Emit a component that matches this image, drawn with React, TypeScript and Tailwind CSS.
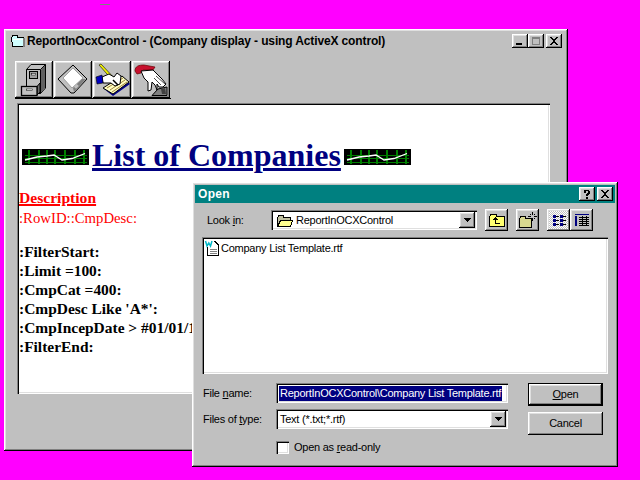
import type React from "react"

const raised = "bg-[#c0c0c0] shadow-[inset_-1px_-1px_0_#000,inset_1px_1px_0_#fff,inset_-2px_-2px_0_#808080,inset_2px_2px_0_#dfdfdf]"
const sunken = "shadow-[inset_1px_1px_0_#808080,inset_2px_2px_0_#000,inset_-1px_-1px_0_#fff,inset_-2px_-2px_0_#dfdfdf]"

function CaptionButton({ children, className = "" }: { children: React.ReactNode; className?: string }) {
  return (
    <div className={`flex h-[14px] w-[16px] items-center justify-center ${raised} ${className}`}>
      <svg width="12" height="10" viewBox="0 0 12 10" shapeRendering="crispEdges">
        {children}
      </svg>
    </div>
  )
}

const closeGlyph = <path d="M2 1h2v1h1v1h2V2h1V1h2v1H9v1H8v1H7v2h1v1h1v1h1v1H8V8H7V7H5v1H4v1H2V8h1V7h1V6h1V4H4V3H3V2H2z" fill="#000" />

function Equalizer() {
  const bars = [6, 16, 24, 32, 42, 52, 61]
  return (
    <svg width="67" height="16" viewBox="0 0 67 16" className="shrink-0" shapeRendering="crispEdges">
      <rect width="67" height="16" fill="#000" />
      {bars.map((x) => (
        <rect key={x} x={x} y="1" width="2" height="14" fill="#008000" />
      ))}
      <rect x="3" y="6" width="62" height="1" fill="#008000" />
      <rect x="3" y="9" width="62" height="1" fill="#008000" />
      <rect x="3" y="13" width="62" height="1" fill="#008000" />
      <path d="M3 11 L15 8 L25 7 L32 6 L40 11 L50 9.500 L63 4.500" fill="none" stroke="#fff" strokeWidth="1.300" shapeRendering="auto" />
    </svg>
  )
}

function Cabinet() {
  return (
    <svg width="38" height="37" viewBox="0 0 38 37">
      <path d="M11.500 8.500 L16 3.500 H30.500 V27 L25.500 32.500 H11.500z" fill="#c0c0c0" stroke="#000" />
      <path d="M11.500 8.500 H25.500 L30.500 3.500 M25.500 8.500 V32.500" fill="none" stroke="#000" />
      <path d="M26 8.500 L30 4.500 V27 L26 31.500z" fill="#606060" />
      <rect x="14.500" y="10.500" width="8" height="7" fill="#a0a0a0" stroke="#000" />
      <rect x="16.500" y="12.500" width="4" height="1.500" fill="#fff" stroke="#000" strokeWidth=".5" />
      <path d="M22 25.500 L25 22 V31 L22 34z" fill="#707070" stroke="#000" />
      <rect x="6.500" y="25.500" width="15.500" height="9" fill="#c0c0c0" stroke="#000" strokeWidth="1.300" />
      <rect x="11.500" y="28" width="6" height="1.500" fill="#fff" stroke="#000" strokeWidth=".5" />
    </svg>
  )
}

function Floppy() {
  return (
    <svg width="38" height="37" viewBox="0 0 38 37">
      <path d="M19 4 L33 18 L20 32 H17 L4 18z" fill="#c0c0c0" stroke="#000" />
      <path d="M19 7 L29 17 L18 27 L9 17z" fill="#fff" stroke="#a0a0a0" />
      <path d="M19 27 L28 18 L32 18 L20 31z" fill="#808080" />
      <rect x="21" y="23" width="3" height="4" fill="#c0c0c0" transform="rotate(45 22 25)" />
    </svg>
  )
}

function Notepad() {
  return (
    <svg width="38" height="37" viewBox="0 0 38 37">
      <path d="M11 28 L30 16 L37 23 L20 35z" fill="#00008b" />
      <path d="M10 27 L29 15 L36 21 L20 33z" fill="#ffffc0" stroke="#000" />
      <path d="M14 27 L30 17 M17 29 L32 19 M19 31 L34 21" stroke="#a08040" fill="none" />
      <path d="M6 4 L8 3 L24 20 L22 22z" fill="#f0f000" stroke="#000" strokeWidth=".6" />
      <path d="M9 16 L16 13 L21 16 L24 12 L28 15 L27 23 L22 25 L18 22 L10 22z" fill="#fff" stroke="#000" />
      <path d="M3 16 L9 14 L10 22 L4 23z" fill="#0000c0" stroke="#000" strokeWidth=".6" />
      <path d="M20 19 L25 24" stroke="#000" strokeWidth="1.500" />
    </svg>
  )
}

function PointingHand() {
  return (
    <svg width="38" height="37" viewBox="0 0 38 37">
      <path d="M3 10 C3 5 7 4 12 4 L23 6 L21 9 L11 9 L9 12 L5 13z" fill="#c8102e" stroke="#600" strokeWidth=".7" />
      <path d="M9 10 L21 9 L30 18 L34 23 L31 26 L27 26 L25 23 L25 29 L23 24 L20 21 L19 29 L16 30 L16 21 L12 17z" fill="#fff" stroke="#000" />
      <path d="M24 15 L33 23 M22 17 L29 24" stroke="#000" strokeWidth=".7" />
      <path d="M20 34.500 L26 28 L35 26 V34.500z" fill="#808080" stroke="#000" />
      <path d="M29 28 L33 27 L34 33 L30 33z" fill="#404040" />
    </svg>
  )
}

function ToolButton({ children }: { children: React.ReactNode }) {
  return <div className={`h-[37px] w-[38px] ${raised}`}>{children}</div>
}

function FolderIcon({ className = "" }: { className?: string }) {
  return (
    <svg width="16" height="13" viewBox="0 0 16 13" className={className} shapeRendering="crispEdges">
      <path d="M0.500 3.500 L2 1.500 H6 L7 3.500 H13.500 V12.500 H0.500z" fill="#c0c0a0" stroke="#000" />
      <path d="M3.500 6.500 H15.500 L13.500 12.500 H0.500z" fill="#ffff90" stroke="#000" />
    </svg>
  )
}

function UpFolder() {
  return (
    <svg width="16" height="14" viewBox="0 0 16 14" shapeRendering="crispEdges">
      <path d="M0.500 3.500 L2 1.500 H7 L8 3.500 H15.500 V13.500 H0.500z" fill="#ffff70" stroke="#000" />
      <path d="M4 6h1v-1h1v-1h1v1h1v1h1v1H7v3h4v1H6V7H4z" fill="#000" />
    </svg>
  )
}

function NewFolder() {
  return (
    <svg width="18" height="16" viewBox="0 0 18 16" shapeRendering="crispEdges">
      <path d="M0.500 6.500 L2 4.500 H6 L7 6.500 H12.500 V15.500 H0.500z" fill="#d8d890" stroke="#000" />
      <path d="M13 0h1v3h-1zM13 6h1v3h-1zM9 4h3v1H9zM15 4h3v1h-3zM11 2h1v1h-1zM15 2h1v1h-1zM15 6h1v1h-1z" fill="#000" />
    </svg>
  )
}

function DropArrow() {
  return (
    <svg width="7" height="4" viewBox="0 0 7 4" shapeRendering="crispEdges">
      <path d="M0 0h7v1H6v1H5v1H4v1H3V3H2V2H1V1H0z" fill="#000" />
    </svg>
  )
}

function ComboArrow() {
  return (
    <div className={`flex h-[16px] w-[16px] shrink-0 items-center justify-center ${raised}`}>
      <DropArrow />
    </div>
  )
}

function SmallButton({ children, className = "" }: { children: React.ReactNode; className?: string }) {
  return (
    <div className={`flex h-[22px] w-[23px] items-center justify-center ${raised} ${className}`}>
      {children}
    </div>
  )
}

function DocLine({ children }: { children: React.ReactNode }) {
  return <p className="h-[19px] whitespace-nowrap text-[15.450px] leading-[19px] font-bold text-black">{children}</p>
}

export default function App() {
  return (
    <div className="relative h-[480px] w-[640px] overflow-hidden bg-[#ff00ff] font-['Liberation_Sans',sans-serif] text-[12px] text-black">
      <div className="absolute top-[4px] left-[100px] h-px w-[10px] bg-[#808080]" />

      {/* main window */}
      <div className={`absolute top-[29px] left-[4px] flex h-[422px] w-[564px] flex-col p-[3px] ${raised}`}>
        <div className="flex h-[18px] shrink-0 items-center pr-[3px] pl-[4px]">
          <svg width="14" height="12" viewBox="0 0 14 12" className="mr-[2px]" shapeRendering="crispEdges">
            <path d="M0.500 2.500 L2 0.500 H6 L7 2.500 H12.500 V11.500 H1.500z" fill="#d0ffff" stroke="#000" />
            <path d="M2 4h10v1H2z" fill="#fff" />
            <path d="M12 3h2v9h-2z" fill="#808080" />
          </svg>
          <span className="flex-1 text-[12px] leading-none font-bold tracking-[-0.130px] whitespace-nowrap">
            ReportInOcxControl - (Company display - using ActiveX control)
          </span>
          <CaptionButton>
            <rect x="2" y="7" width="6" height="2" fill="#000" />
          </CaptionButton>
          <CaptionButton>
            <path d="M2 1h8v8H2zM3 3v5h6V3z" fill="#808080" fillRule="evenodd" />
          </CaptionButton>
          <CaptionButton className="ml-[2px]">{closeGlyph}</CaptionButton>
        </div>

        <div className="mt-[11px] ml-[8px] flex w-[156px] gap-[1px] border-b border-black">
          <ToolButton><Cabinet /></ToolButton>
          <ToolButton><Floppy /></ToolButton>
          <ToolButton><Notepad /></ToolButton>
          <ToolButton><PointingHand /></ToolButton>
        </div>

        <div className={`mt-[4px] ml-[10px] h-[291px] w-[533px] overflow-hidden bg-white pt-[33px] pl-[2px] font-['Liberation_Serif',serif] ${sunken}`}>
          <div className="ml-[3px] flex h-[38px] items-end gap-[3px]">
            <div className="mb-[9px]"><Equalizer /></div>
            <h1 className="text-[32px] leading-[38px] font-bold whitespace-nowrap text-[#000080] underline decoration-[3px] underline-offset-[2px]">
              List of Companies
            </h1>
            <div className="mb-[9px]"><Equalizer /></div>
          </div>
          <div className="mt-[14px]">
            <p className="h-[20px] text-[15.600px] leading-[20px] font-bold text-[#ff0000] underline decoration-2">Description</p>
            <p className="h-[20px] text-[14.750px] leading-[20px] text-[#ff0000]">:RowID::CmpDesc:</p>
            <div className="mt-[14px]">
              <DocLine>:FilterStart:</DocLine>
              <DocLine>:Limit =100:</DocLine>
              <DocLine>:CmpCat =400:</DocLine>
              <DocLine>:CmpDesc Like 'A*':</DocLine>
              <DocLine>:CmpIncepDate &gt; #01/01/1990#:</DocLine>
              <DocLine>:FilterEnd:</DocLine>
            </div>
          </div>
        </div>
      </div>

      {/* open dialog */}
      <div className={`absolute top-[182px] left-[192px] flex h-[285px] w-[426px] flex-col p-[3px] text-[11px] tracking-[-0.250px] ${raised}`}>
        <div className="flex h-[18px] shrink-0 items-center bg-[#008080] pr-[2px] pl-[3px]">
          <span className="flex-1 text-[12px] leading-none font-bold tracking-[0.300px] text-white">Open</span>
          <CaptionButton>
            <path d="M3 1h5v1h1v3H8v1H7v1H5V5h1V4h1V2H5v2H3zM5 8h2v2H5z" fill="#000" />
          </CaptionButton>
          <CaptionButton className="ml-[2px]">{closeGlyph}</CaptionButton>
        </div>

        <div className="mt-[7px] flex h-[20px] items-center pl-[12px]">
          <span className="w-[64px]">Look <span className="underline">i</span>n:</span>
          <div className={`flex h-[20px] w-[206px] items-center bg-white pr-[2px] pl-[6px] ${sunken}`}>
            <FolderIcon className="mr-[3px]" />
            <span className="flex-1">ReportInOCXControl</span>
            <ComboArrow />
          </div>
          <SmallButton className="ml-[8px]"><UpFolder /></SmallButton>
          <SmallButton className="ml-[8px]"><NewFolder /></SmallButton>
          <SmallButton className="ml-[8px] bg-[repeating-conic-gradient(#fff_0_25%,#c0c0c0_0_50%)] bg-[length:2px_2px]">
            <svg width="14" height="13" viewBox="0 0 14 13" shapeRendering="crispEdges">
              <path d="M1 1h3v3H1zM1 5h3v3H1zM1 9h3v3H1zM8 1h3v3H8zM8 5h3v3H8zM8 9h3v3H8z" fill="#000080" />
              <path d="M4 2h3v1H4zM4 6h3v1H4zM4 10h3v1H4zM11 2h3v1h-3zM11 6h3v1h-3zM11 10h3v1h-3z" fill="#000" />
            </svg>
          </SmallButton>
          <SmallButton>
            <svg width="16" height="14" viewBox="0 0 16 14" shapeRendering="crispEdges">
              <rect x="1" y="1" width="14" height="1" fill="#000080" />
              <path d="M1 3h2v10H1z" fill="#000080" />
              <path d="M5 4h10v1H5zM5 6h10v1H5zM5 8h10v1H5zM5 10h10v1H5zM5 12h10v1H5zM8 3h1v10H8zM12 3h1v10h-1z" fill="#000" />
            </svg>
          </SmallButton>
        </div>

        <div className={`mt-[7px] ml-[7px] h-[137px] w-[406px] bg-white pt-[3px] pl-[2px] ${sunken}`}>
          <div className="flex items-center gap-[1px]">
            <svg width="16" height="16" viewBox="0 0 16 16" shapeRendering="crispEdges">
              <path d="M3.500 1.500H11L14.500 5V15.500H3.500z" fill="#fff" stroke="#000" />
              <path d="M6 9h7M6 11h7M6 13h7" stroke="#808080" />
              <rect x="0" y="0" width="10" height="7" fill="#fff" />
              <path d="M1.500 1l1.500 5L4.800 3l1.700 3L8 1" fill="none" stroke="#00b8c8" strokeWidth="1.500" shapeRendering="auto" />
            </svg>
            <span>Company List Template.rtf</span>
          </div>
        </div>

        <div className="mt-[9px] flex pl-[8px]">
          <div className="w-[325px]">
            <div className="flex h-[20px] items-center">
              <span className="w-[73px]">File <span className="underline">n</span>ame:</span>
              <div className={`flex h-[20px] w-[232px] items-center overflow-hidden bg-white pl-[3px] ${sunken}`}>
                <span className="bg-[#000080] px-px leading-[15px] whitespace-nowrap text-white">ReportInOCXControl\Company List Template.rtf</span>
              </div>
            </div>
            <div className="mt-[6px] flex h-[20px] items-center">
              <span className="w-[73px]">Files of <span className="underline">t</span>ype:</span>
              <div className={`flex h-[20px] w-[232px] items-center bg-white pr-[2px] pl-[4px] ${sunken}`}>
                <span className="flex-1">Text (*.txt;*.rtf)</span>
                <ComboArrow />
              </div>
            </div>
            <div className="mt-[10px] ml-[73px] flex items-center gap-[5px]">
              <div className={`h-[13px] w-[13px] bg-white ${sunken}`} />
              <span>Open as <span className="underline">r</span>ead-only</span>
            </div>
          </div>
          <div className="flex flex-col gap-[6px]">
            <div className={`flex h-[23px] w-[75px] items-center justify-center border border-black ${raised}`}>
              <span><span className="underline">O</span>pen</span>
            </div>
            <div className={`flex h-[23px] w-[75px] items-center justify-center ${raised}`}>Cancel</div>
          </div>
        </div>
      </div>
    </div>
  )
}
